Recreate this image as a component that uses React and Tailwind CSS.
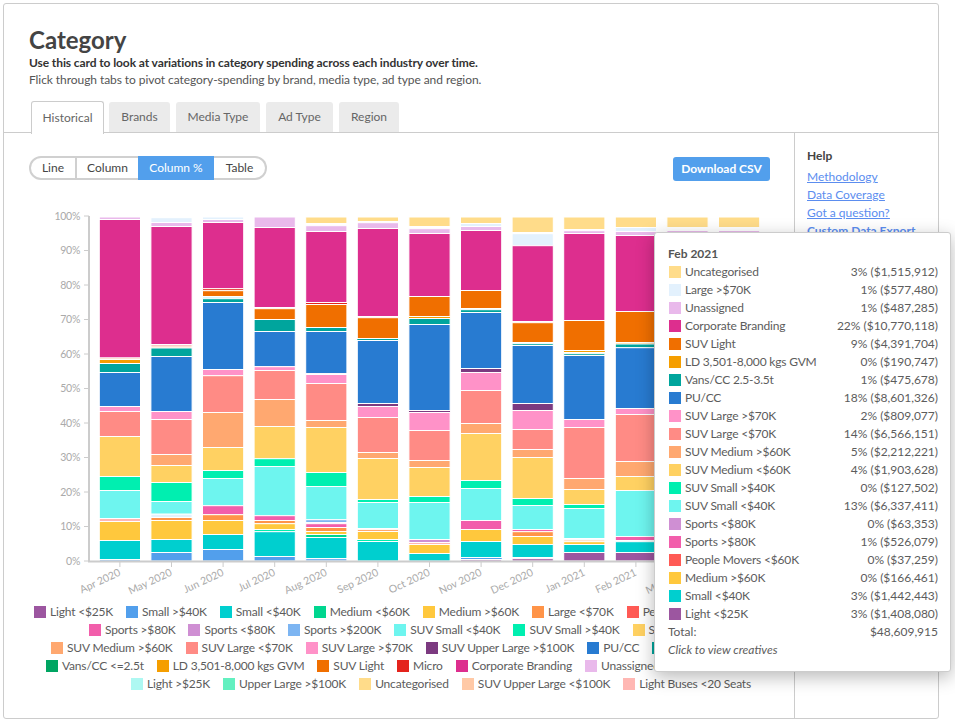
import React from "react";

const C = {
  light: { hex: "#9c56a0", bg: "bg-[#9c56a0]" },
  smallGt: { hex: "#529fec", bg: "bg-[#529fec]" },
  small: { hex: "#00cfcf", bg: "bg-[#00cfcf]" },
  medLt: { hex: "#00d68f", bg: "bg-[#00d68f]" },
  medGt: { hex: "#ffc83d", bg: "bg-[#ffc83d]" },
  large: { hex: "#ff9448", bg: "bg-[#ff9448]" },
  people: { hex: "#ff5a55", bg: "bg-[#ff5a55]" },
  sports: { hex: "#f25eab", bg: "bg-[#f25eab]" },
  sportsLt: { hex: "#cf8fd3", bg: "bg-[#cf8fd3]" },
  sports200: { hex: "#7db5f2", bg: "bg-[#7db5f2]" },
  suvSmall: { hex: "#6ef5ef", bg: "bg-[#6ef5ef]" },
  suvSmallGt: { hex: "#00efb0", bg: "bg-[#00efb0]" },
  suvMedLt: { hex: "#ffd162", bg: "bg-[#ffd162]" },
  suvMedGt: { hex: "#ffa870", bg: "bg-[#ffa870]" },
  suvLargeLt: { hex: "#ff8b85", bg: "bg-[#ff8b85]" },
  suvLargeGt: { hex: "#ff92c8", bg: "bg-[#ff92c8]" },
  suvUpper: { hex: "#7c3a80", bg: "bg-[#7c3a80]" },
  pucc: { hex: "#287bd1", bg: "bg-[#287bd1]" },
  vans: { hex: "#00a59d", bg: "bg-[#00a59d]" },
  vansLt: { hex: "#00a562", bg: "bg-[#00a562]" },
  ld: { hex: "#f59e00", bg: "bg-[#f59e00]" },
  suvLight: { hex: "#f06f00", bg: "bg-[#f06f00]" },
  micro: { hex: "#e4231c", bg: "bg-[#e4231c]" },
  corp: { hex: "#dd2e8e", bg: "bg-[#dd2e8e]" },
  unassigned: { hex: "#e9b9eb", bg: "bg-[#e9b9eb]" },
  largeGt: { hex: "#e3f1fd", bg: "bg-[#e3f1fd]" },
  uncat: { hex: "#ffdc8a", bg: "bg-[#ffdc8a]" },
  lightGt: { hex: "#aef8f2", bg: "bg-[#aef8f2]" },
  upper: { hex: "#63f0c0", bg: "bg-[#63f0c0]" },
  suvUpperLt: { hex: "#ffc9a6", bg: "bg-[#ffc9a6]" },
  buses: { hex: "#ffb7b3", bg: "bg-[#ffb7b3]" },
};

// each bar: [series, y where it ends] from the top of the stack down, y in page pixels
const bars = [
  [["unassigned", 219.5], ["corp", 358], ["suvUpperLt", 359.5], ["ld", 363.5], ["vans", 372.5], ["pucc", 406.5], ["suvLargeGt", 411.5], ["suvLargeLt", 436.5], ["suvMedLt", 476.5], ["suvSmallGt", 490.5], ["suvSmall", 518.5], ["buses", 521.5], ["medGt", 540.5], ["small", 559.5], ["smallGt", 561]],
  [["lightGt", 217.7], ["largeGt", 222.5], ["unassigned", 226.5], ["corp", 344.5], ["micro", 346], ["suvUpperLt", 348], ["vans", 356.5], ["pucc", 411.5], ["suvLargeGt", 419.5], ["suvLargeLt", 454.5], ["suvMedGt", 465.5], ["suvMedLt", 482.5], ["suvSmallGt", 501.5], ["suvSmall", 514.2], ["largeGt", 517.5], ["large", 520.5], ["medGt", 539.5], ["small", 552.5], ["smallGt", 561]],
  [["largeGt", 219.5], ["unassigned", 222.5], ["corp", 288.7], ["micro", 290.7], ["suvLight", 296.5], ["largeGt", 298.7], ["vans", 302.5], ["pucc", 369.5], ["suvLargeGt", 375.7], ["suvLargeLt", 412.5], ["suvMedGt", 447.5], ["suvMedLt", 470.5], ["suvSmallGt", 478.5], ["suvSmall", 505.7], ["sports", 514.7], ["large", 520.5], ["medGt", 534.5], ["small", 549.5], ["smallGt", 561]],
  [["unassigned", 227.5], ["corp", 307.5], ["largeGt", 308.7], ["suvLight", 319.5], ["vans", 331.5], ["pucc", 366.7], ["suvLargeGt", 370.5], ["suvLargeLt", 399.5], ["suvMedGt", 426.5], ["suvMedLt", 458.7], ["suvSmallGt", 466.5], ["suvSmall", 515.7], ["sports", 520.5], ["large", 523.7], ["medGt", 529.5], ["suvSmallGt", 531.7], ["small", 556.5], ["smallGt", 561]],
  [["uncat", 223.5], ["white", 225.7], ["unassigned", 231.5], ["corp", 302.5], ["micro", 304.5], ["suvLight", 327.5], ["vans", 331.5], ["pucc", 373.7], ["buses", 374.5], ["suvLargeGt", 383.5], ["suvLargeLt", 420.5], ["suvMedGt", 427.5], ["suvMedLt", 472.5], ["suvSmallGt", 486.5], ["suvSmall", 519.7], ["sports200", 522.7], ["largeGt", 523.7], ["sports", 527.5], ["large", 531.5], ["medGt", 534.5], ["medLt", 537.5], ["small", 558.5], ["sports200", 561]],
  [["uncat", 221.5], ["largeGt", 222.7], ["unassigned", 228.5], ["corp", 316.5], ["buses", 317.7], ["suvLight", 338.5], ["vans", 340.5], ["pucc", 403.5], ["suvUpper", 406.5], ["suvLargeGt", 417.5], ["suvLargeLt", 452.5], ["suvMedGt", 458.5], ["suvMedLt", 499.5], ["suvSmallGt", 502.5], ["suvSmall", 528.5], ["buses", 529.7], ["large", 531.5], ["medGt", 539.5], ["suvSmallGt", 541.5], ["small", 561]],
  [["uncat", 226.5], ["white", 228.7], ["unassigned", 233.5], ["corp", 296.5], ["suvLight", 316.5], ["ld", 318.5], ["vans", 324.5], ["pucc", 410.5], ["suvUpper", 412.5], ["suvLargeGt", 430.5], ["suvLargeLt", 460.5], ["suvMedGt", 467.5], ["suvMedLt", 496.5], ["suvSmallGt", 502.5], ["suvSmall", 539.5], ["sportsLt", 542.5], ["buses", 544.5], ["medGt", 553.5], ["small", 561]],
  [["uncat", 223.5], ["largeGt", 226.5], ["unassigned", 230.5], ["corp", 290.5], ["suvLight", 308.5], ["largeGt", 309.7], ["vans", 312.5], ["pucc", 368.5], ["suvUpper", 372.5], ["suvLargeGt", 390.5], ["suvLargeLt", 423.5], ["suvMedGt", 433.5], ["suvMedLt", 480.5], ["suvSmallGt", 488.5], ["suvSmall", 520.5], ["sports", 529.5], ["medGt", 541.5], ["small", 557.5], ["smallGt", 559.5], ["light", 561]],
  [["uncat", 232.5], ["white", 233.7], ["largeGt", 245.7], ["corp", 321.5], ["buses", 322.7], ["suvLight", 342.5], ["suvUpperLt", 343.7], ["vans", 345.5], ["pucc", 403.5], ["suvUpper", 410.5], ["suvLargeGt", 429.5], ["suvLargeLt", 449.5], ["suvMedGt", 457.5], ["suvMedLt", 498.5], ["suvSmallGt", 505.5], ["suvSmall", 529.5], ["sports", 531.7], ["large", 536.5], ["medGt", 544.5], ["small", 557.5], ["white", 558.7], ["light", 561]],
  [["uncat", 229.5], ["white", 230.7], ["unassigned", 233.5], ["corp", 320.5], ["suvLight", 350.5], ["ld", 352.5], ["suvUpperLt", 353.7], ["vans", 355.5], ["pucc", 419.5], ["suvLargeGt", 427.5], ["suvLargeLt", 478.5], ["suvMedGt", 489.5], ["suvMedLt", 504.5], ["suvSmallGt", 508.5], ["suvSmall", 538.5], ["largeGt", 540], ["suvUpperLt", 541.7], ["medGt", 544.5], ["small", 552.5], ["light", 561]],
  [["uncat", 227.5], ["largeGt", 231.5], ["unassigned", 235.5], ["corp", 311.5], ["suvLight", 342.5], ["ld", 344], ["vans", 347.7], ["pucc", 408.5], ["suvLargeGt", 414.5], ["suvLargeLt", 461.5], ["suvMedGt", 476.5], ["suvMedLt", 490.5], ["suvSmall", 536.5], ["sports", 540.5], ["buses", 541.7], ["small", 552.5], ["light", 561]],
  [["uncat", 227.5], ["white", 230.5], ["unassigned", 240]],
  [["uncat", 227.5], ["white", 230.5], ["unassigned", 240]],
];

const months = ["Apr 2020", "May 2020", "Jun 2020", "Jul 2020", "Aug 2020", "Sep 2020", "Oct 2020", "Nov 2020", "Dec 2020", "Jan 2021", "Feb 2021", "Mar 2021", "Apr 2021"];

const legendRows = [
  { pad: "pl-[30px]", items: [["light", "Light <$25K"], ["smallGt", "Small >$40K"], ["small", "Small <$40K"], ["medLt", "Medium <$60K"], ["medGt", "Medium >$60K"], ["large", "Large <$70K"], ["people", "People Movers <$60K"]] },
  { pad: "pl-[85px]", items: [["sports", "Sports >$80K"], ["sportsLt", "Sports <$80K"], ["sports200", "Sports >$200K"], ["suvSmall", "SUV Small <$40K"], ["suvSmallGt", "SUV Small >$40K"], ["suvMedLt", "SUV Medium <$60K"]] },
  { pad: "pl-[47px]", items: [["suvMedGt", "SUV Medium >$60K"], ["suvLargeLt", "SUV Large <$70K"], ["suvLargeGt", "SUV Large >$70K"], ["suvUpper", "SUV Upper Large >$100K"], ["pucc", "PU/CC"], ["vans", "Vans/CC 2.5-3.5t"]] },
  { pad: "pl-[42px]", items: [["vansLt", "Vans/CC <=2.5t"], ["ld", "LD 3,501-8,000 kgs GVM"], ["suvLight", "SUV Light"], ["micro", "Micro"], ["corp", "Corporate Branding"], ["unassigned", "Unassigned"], ["largeGt", "Large >$70K"]] },
  { pad: "pl-[127px]", items: [["lightGt", "Light >$25K"], ["upper", "Upper Large >$100K"], ["uncat", "Uncategorised"], ["suvUpperLt", "SUV Upper Large <$100K"], ["buses", "Light Buses <20 Seats"]] },
];

const tooltipRows = [
  ["uncat", "Uncategorised", "3% ($1,515,912)"],
  ["largeGt", "Large >$70K", "1% ($577,480)"],
  ["unassigned", "Unassigned", "1% ($487,285)"],
  ["corp", "Corporate Branding", "22% ($10,770,118)"],
  ["suvLight", "SUV Light", "9% ($4,391,704)"],
  ["ld", "LD 3,501-8,000 kgs GVM", "0% ($190,747)"],
  ["vans", "Vans/CC 2.5-3.5t", "1% ($475,678)"],
  ["pucc", "PU/CC", "18% ($8,601,326)"],
  ["suvLargeGt", "SUV Large >$70K", "2% ($809,077)"],
  ["suvLargeLt", "SUV Large <$70K", "14% ($6,566,151)"],
  ["suvMedGt", "SUV Medium >$60K", "5% ($2,212,221)"],
  ["suvMedLt", "SUV Medium <$60K", "4% ($1,903,628)"],
  ["suvSmallGt", "SUV Small >$40K", "0% ($127,502)"],
  ["suvSmall", "SUV Small <$40K", "13% ($6,337,411)"],
  ["sportsLt", "Sports <$80K", "0% ($63,353)"],
  ["sports", "Sports >$80K", "1% ($526,079)"],
  ["people", "People Movers <$60K", "0% ($37,259)"],
  ["medGt", "Medium >$60K", "0% ($166,461)"],
  ["small", "Small <$40K", "3% ($1,442,443)"],
  ["light", "Light <$25K", "3% ($1,408,080)"],
];

const tabs = [
  ["Brands", "w-[61px]"],
  ["Media Type", "w-[84px]"],
  ["Ad Type", "w-[67px]"],
  ["Region", "w-[60px]"],
];

const Chart = () => (
  // viewBox uses page pixels so the bar data can be read straight off the picture
  <svg viewBox="4 190 790 410" width="790" height="410" className="block">
    {[0, 10, 20, 30, 40, 50, 60, 70, 80, 90, 100].map((p) => {
      const y = 561 - p * 3.45;
      return (
        <g key={p}>
          <line x1="84" x2="89" y1={y} y2={y} stroke="#ccc" strokeWidth="1" />
          <text x="80" y={y + 3.5} textAnchor="end" fontSize="10.5" letterSpacing="-0.3" fill="#aaa">{p}%</text>
        </g>
      );
    })}
    <line x1="89" x2="89" y1="216" y2="562" stroke="#ccc" strokeWidth="2" />
    {bars.map((stack, i) => {
      const x = 99.3 + 51.6 * i;
      let top = 217;
      return (
        <g key={i}>
          {stack.map(([key, end], j) => {
            const y = top;
            top = end;
            return (
              <rect key={j} x={x} y={y} width="41.2" height={end - y} fill={key === "white" ? "#fff" : C[key].hex} stroke="#fff" strokeWidth="1" />
            );
          })}
          <line x1={x + 20.6} x2={x + 20.6} y1="562" y2="567" stroke="#ccc" strokeWidth="1" />
          <text x={x + 22} y="575" textAnchor="end" fontSize="10.5" fill="#aaa" transform={`rotate(-25 ${x + 22} 575)`}>{months[i]}</text>
        </g>
      );
    })}
    <line x1="88" x2="770" y1="561.5" y2="561.5" stroke="#ccc" strokeWidth="2" />
  </svg>
);

const App = () => {
  return (
    <div className="relative w-[955px] h-[723px] bg-white pt-[3px] pl-[3px] overflow-hidden font-['Lato',sans-serif] text-[12px] text-[#5c5c5c]">
      <div className="w-[936px] h-[716px] border border-[#ccc] rounded-[3px] flex flex-col">
        <div className="h-[97px] pl-[25px] pt-[22px] shrink-0">
          <h1 className="text-[24px] leading-[28px] font-bold text-[#444]">Category</h1>
          <p className="leading-[18px] font-bold text-[#333] tracking-[-0.1px]">Use this card to look at variations in category spending across each industry over time.</p>
          <p className="-mt-[1px] leading-[18px] text-[#555] tracking-[-0.07px]">Flick through tabs to pivot category-spending by brand, media type, ad type and region.</p>
        </div>
        <div className="relative h-[32px] pl-[27px] flex gap-[6px] border-b border-[#ccc] shrink-0">
          <div className="h-[33px] w-[73px] -mr-[1px] bg-white border border-b-0 border-[#ccc] rounded-t-[3px] flex items-center justify-center text-[#666]">Historical</div>
          {tabs.map(([t, w]) => (
            <div key={t} className={`h-[30px] mt-[1px] ${w} bg-[#ebebeb] rounded-t-[3px] flex items-center justify-center text-[#666]`}>{t}</div>
          ))}
        </div>
        <div className="flex flex-1 min-h-0">
          <div className="w-[791px] border-r border-[#ccc] shrink-0 overflow-hidden">
            <div className="flex items-center justify-between pl-[25px] pr-[24px] pt-[13px] h-[57px]">
              <div className="flex h-[24px] text-[#444]">
                <div className="w-[48px] flex items-center justify-center border-2 border-[#d0d0d0] rounded-l-full">Line</div>
                <div className="w-[61px] flex items-center justify-center border-y-2 border-[#d0d0d0]">Column</div>
                <div className="w-[76px] flex items-center justify-center bg-[#529fec] text-white">Column %</div>
                <div className="w-[53px] flex items-center justify-center border-2 border-l-0 border-[#d0d0d0] rounded-r-full">Table</div>
              </div>
              <div className="w-[97px] h-[24px] mt-[2px] bg-[#529fec] rounded-[3px] text-white font-bold flex items-center justify-center">Download CSV</div>
            </div>
            <Chart />
            <div className="mt-[3px] flex flex-col tracking-[-0.18px]">
              {legendRows.map((row, i) => (
                <div key={i} className={`flex h-[18px] items-center gap-[13px] whitespace-nowrap ${row.pad}`}>
                  {row.items.map(([key, label]) => (
                    <div key={label} className="flex items-center gap-[4px]">
                      <span className={`w-[12px] h-[12px] ${C[key].bg}`} />
                      <span>{label}</span>
                    </div>
                  ))}
                </div>
              ))}
            </div>
          </div>
          <div className="flex-1 pl-[12px] pt-[14px] leading-[18px]">
            <div className="font-bold text-[#444]">Help</div>
            <div className="mt-[3px] flex flex-col text-[#5b8def] underline">
              <a>Methodology</a>
              <a>Data Coverage</a>
              <a>Got a question?</a>
              <a className="font-bold">Custom Data Export</a>
            </div>
          </div>
        </div>
      </div>

      <div className="absolute left-[654px] top-[232px] w-[297px] h-[440px] bg-white border border-[#ccc] rounded-[3px] shadow-[0_5px_18px_rgba(0,0,0,0.28)] pl-[13px] pr-[12px] pt-[12px]">
        <div className="h-[18px] leading-[18px] font-bold text-[#555]">Feb 2021</div>
        {tooltipRows.map(([key, label, value]) => (
          <div key={label} className="h-[18px] flex items-center leading-[18px]">
            <span className={`w-[12px] h-[12px] ml-[1px] mr-[4px] ${C[key].bg}`} />
            <span className="flex-1 tracking-[-0.18px]">{label}</span>
            <span>{value}</span>
          </div>
        ))}
        <div className="h-[18px] flex justify-between items-center">
          <span>Total:</span>
          <span>$48,609,915</span>
        </div>
        <div className="h-[18px] leading-[18px] italic">Click to view creatives</div>
      </div>
    </div>
  );
};

export default App;
